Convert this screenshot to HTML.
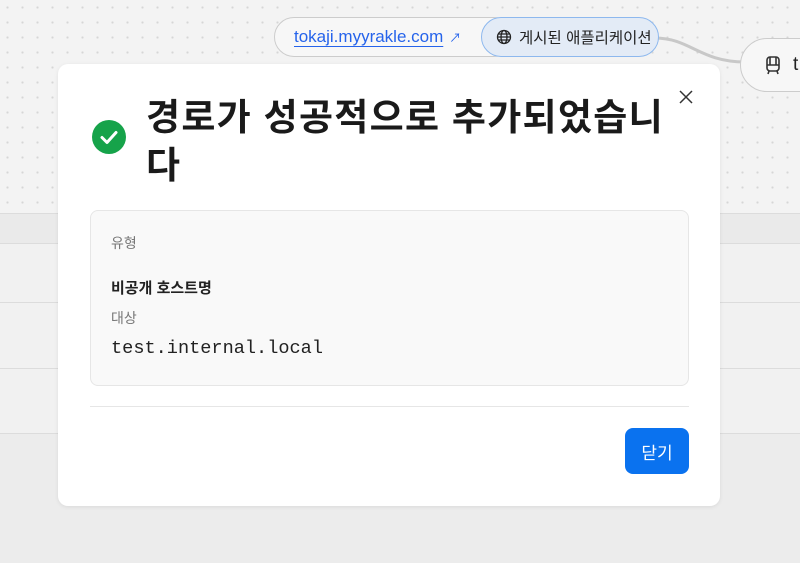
<!DOCTYPE html>
<html><head><meta charset="utf-8"><style>
*{margin:0;padding:0;box-sizing:border-box}
body{width:800px;height:563px;overflow:hidden;position:relative;background:#ececec;font-family:"Liberation Sans","Noto Sans CJK KR",sans-serif;}
.dots{position:absolute;left:0;top:0;width:800px;height:213px;background-color:#f3f3f3;background-image:radial-gradient(#d6d6d6 1px,transparent 1.2px);background-size:15px 15px;}
.band{position:absolute;left:0;width:800px;background:#f1f1f1;border-top:1px solid #dcdcdc}
.pill{position:absolute;height:40px;border-radius:20px;display:flex;align-items:center;font-size:14px}
.modal{position:absolute;left:58px;top:64px;width:662px;height:442px;background:#fff;border-radius:10px;box-shadow:0 1px 4px rgba(0,0,0,.08)}
h1{position:absolute;left:88px;top:30px;width:560px;font-size:37px;line-height:48px;font-weight:700;color:#1a1a1a;letter-spacing:1.3px;white-space:nowrap}
.box{position:absolute;left:32px;top:146px;width:599px;height:176px;background:#f9f9f9;border:1px solid #e6e6e6;border-radius:8px}
.lbl{position:absolute;left:20px;font-size:14px;color:#777}
</style></head><body>
<div class="dots"></div>
<div class="band" style="top:213px;height:30px;background:#eaeaea"></div>
<div class="band" style="top:243px;height:59px"></div>
<div class="band" style="top:302px;height:66px"></div>
<div class="band" style="top:368px;height:65px"></div>
<div class="band" style="top:433px;height:130px;background:#ececec"></div>
<svg style="position:absolute;left:650px;top:30px" width="100" height="40"><path d="M5 8 C40 8,50 32,95 32" stroke="#c8c8c8" stroke-width="3" fill="none"/></svg>
<div class="pill" style="left:274px;top:17px;width:240px;border:1px solid #ccc;background:#f7f7f7;padding-left:19px"><span style="color:#2563eb;font-size:17px;text-decoration:underline;text-underline-offset:4px">tokaji.myyrakle.com</span><span style="color:#2563eb;font-size:12px;margin-left:6px">↗</span></div>
<div class="pill" style="left:481px;top:17px;width:178px;border:1px solid #8db8ee;background:#e3ebf6;padding-left:14px;color:#222"><svg width="16" height="16" viewBox="0 0 16 16" fill="none" stroke="#222" stroke-width="1.3"><circle cx="8" cy="8" r="6.5"/><ellipse cx="8" cy="8" rx="3" ry="6.5"/><path d="M1.5 8h13M2.5 5h11M2.5 11h11"/></svg><span style="margin-left:7px;font-size:15.5px">게시된 애플리케이션</span></div>
<div class="pill" style="left:740px;top:38px;width:100px;height:54px;border-radius:27px;border:1px solid #ccc;background:#f7f7f7;padding-left:22px;font-size:19px;color:#222"><svg width="20" height="20" viewBox="0 0 20 20" fill="none" stroke="#333" stroke-width="1.6" style="margin-right:10px"><rect x="4" y="2" width="12" height="14" rx="3"/><path d="M4 10h12M7 2v8M13 2v8M6 16l-1 3M14 16l1 3"/></svg>t</div>
<div class="modal">
<svg style="position:absolute;left:34px;top:56px" width="34" height="34"><circle cx="17" cy="17" r="17" fill="#16a34a"/><path d="M10 17.5l5 5 9-10" stroke="#fff" stroke-width="3" fill="none" stroke-linecap="round" stroke-linejoin="round"/></svg>
<h1>경로가 성공적으로 추가되었습니<br>다</h1>
<svg style="position:absolute;left:621px;top:26px" width="14" height="14"><path d="M1 1l12 12M13 1L1 13" stroke="#333" stroke-width="1.5"/></svg>
<div class="box">
<div class="lbl" style="top:22px">유형</div>
<div style="position:absolute;left:20px;top:66px;font-size:15px;font-weight:700;color:#222">비공개 호스트명</div>
<div class="lbl" style="top:97px">대상</div>
<div style="position:absolute;left:20px;top:127px;font-size:18.6px;font-family:'Liberation Mono',monospace;color:#222">test.internal.local</div>
</div>
<div style="position:absolute;left:32px;top:342px;width:599px;border-top:1px solid #e6e6e6"></div>
<div style="position:absolute;left:567px;top:364px;width:64px;height:46px;background:#0a72ef;border-radius:8px;color:#fff;font-size:17px;display:flex;align-items:center;justify-content:center">닫기</div>
</div>
</body></html>
